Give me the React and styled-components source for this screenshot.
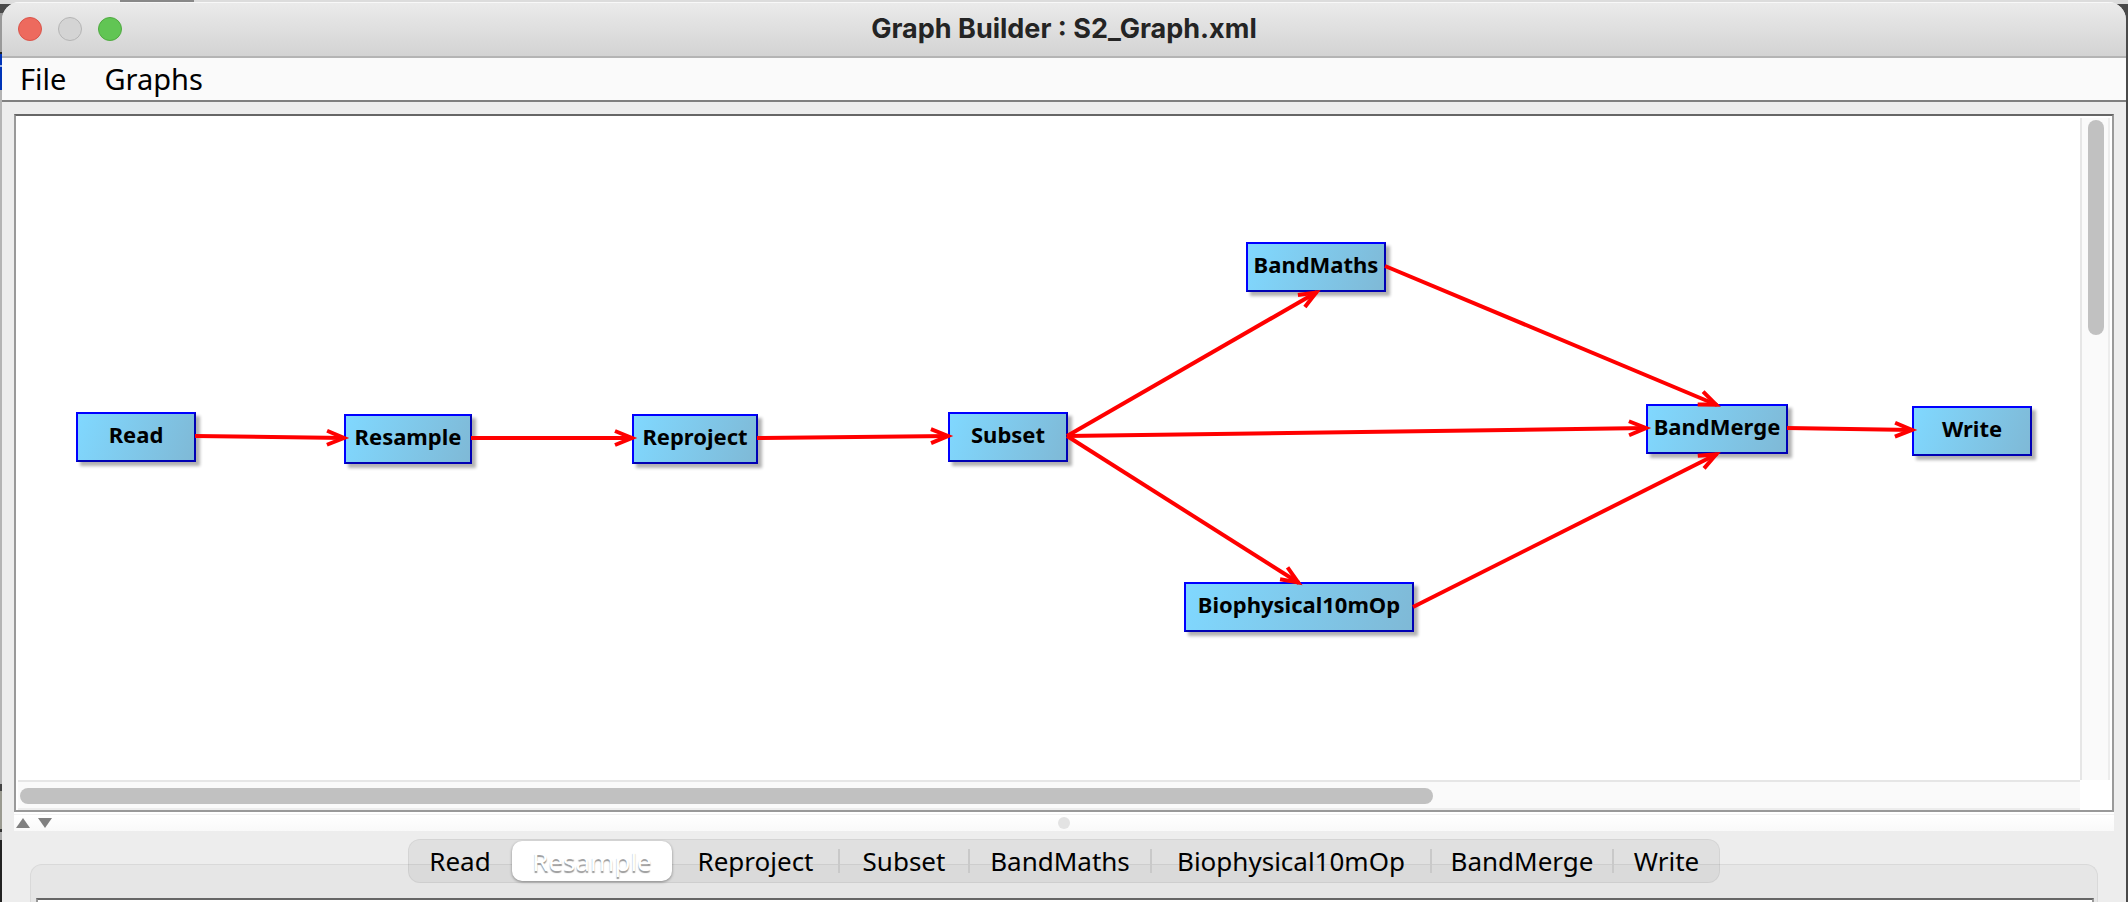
import React, { useState } from "react";
import styled, { createGlobalStyle, css } from "styled-components";

const GlobalStyle = createGlobalStyle`
  *, *::before, *::after { box-sizing: border-box; }
  body { margin: 0; }
  button { margin: 0; padding: 0; border: 0; background: none; font: inherit; color: inherit; }
`;

const Desktop = styled.div`
  height: 100vh;
  min-height: 600px;
  padding: 2px 2px 0;
  overflow: hidden;
  font-family: "Noto Sans", "Liberation Sans", sans-serif;
  color: #000;
  background:
    linear-gradient(#888, #888) 120px 0 / 74px 2px no-repeat,
    linear-gradient(#dcdcdc 0 4px, transparent 4px) 0 0 / 100% 4px no-repeat,
    linear-gradient(#4a4a4a 0 13px, #999 13px 52px, #222 52px 54px, #0034b8 54px 65px,
      #9db4e8 65px 67px, #0034b8 67px 90px, #b4b4b4 90px 784px, #444 784px 791px,
      #9a9a90 791px 829px, #333 829px 832px, #aaa 832px 840px, #222 840px) 0 0 / 20px 100% no-repeat,
    #4a4a4a;
`;

const Window = styled.main`
  display: flex;
  flex-direction: column;
  height: 100%;
  overflow: hidden;
  border-radius: 18px 18px 0 0;
  background: #ededed;
`;

const TitleBar = styled.header`
  display: grid;
  grid-template-columns: 1fr auto 1fr;
  align-items: center;
  flex: none;
  height: 56px;
  padding: 0 16px;
  border-bottom: 2px solid #b4b4b4;
  background: linear-gradient(#ebebeb, #d3d3d3);
  box-shadow: inset 0 1px 0 #f8f8f8;
`;

const Lights = styled.div`
  display: flex;
  gap: 16px;
`;

const Light = styled.button`
  width: 24px;
  height: 24px;
  border: 1px solid ${(p) => p.$edge};
  border-radius: 50%;
  background: ${(p) => p.$fill};
`;

const Title = styled.h1`
  margin: 0;
  font: 700 27px/32px Inter, "Liberation Sans", sans-serif;
  color: #242424;
`;

const MenuBar = styled.nav`
  display: flex;
  align-items: center;
  gap: 38px;
  flex: none;
  height: 44px;
  padding: 0 18px;
  border-bottom: 2px solid #808080;
  background: #fafafa;
  font-size: 29px;
  line-height: 40px;
`;

const Content = styled.div`
  display: flex;
  flex-direction: column;
  flex: 1;
  min-height: 0;
  padding: 12px 12px 0;
`;

const ScrollPane = styled.section`
  display: grid;
  grid-template: minmax(0, 1fr) 30px / minmax(0, 1fr) 32px;
  flex: 1;
  min-height: 0;
  border: 2px solid #999;
  border-top-color: #666;
  background: #fff;
`;

const Canvas = styled.div`
  position: relative;
  overflow: hidden;
`;

const Edges = styled.svg`
  position: absolute;
  inset: 0;
  width: 100%;
  height: 100%;
  fill: none;
  stroke: #f00;
  stroke-width: 4;
  pointer-events: none;
`;

const Node = styled.button`
  position: absolute;
  left: ${(p) => p.$x}px;
  top: ${(p) => p.$y}px;
  width: ${(p) => p.$w}px;
  height: 50px;
  padding-bottom: 6px;
  border: 2px solid;
  border-color: #00f #0000b4 #0000b4 #00f;
  background: linear-gradient(110deg, #80d8ff, #7fb9d6);
  box-shadow: 4px 4px 3px rgba(0, 0, 0, 0.3);
  font-size: 22px;
  font-weight: 700;
  line-height: 28px;
  white-space: nowrap;
`;

const Track = styled.div`
  background: #fafafa;
  ${(p) =>
    p.$vertical
      ? css`
          margin: 2px 2px 0 0;
          padding: 2px 4px 2px 6px;
          border-left: 2px solid #e6e6e6;
          border-right: 2px solid #ededed;
        `
      : css`
          margin-left: 2px;
          padding: 6px 2px 4px;
          border-top: 2px solid #e6e6e6;
          border-bottom: 2px solid #ededed;
        `}
`;

const Thumb = styled.div`
  width: ${(p) => (p.$vertical ? "16px" : p.$size)};
  height: ${(p) => (p.$vertical ? p.$size : "16px")};
  border-radius: 8px;
  background: #c1c1c1;
`;

const Divider = styled.div`
  display: grid;
  grid-template-columns: 1fr auto 1fr;
  align-items: center;
  flex: none;
  height: 19px;
  padding: 3px 2px 0;
  background: linear-gradient(#fff 0 2px, #f2f2f2 2px 3px, #fff 3px, #f9f9f9);
`;

const Arrows = styled.div`
  display: flex;
  gap: 8px;
`;

const ArrowButton = styled.button`
  display: flex;
  svg { width: 14px; height: 10px; fill: #808080; }
`;

const Grip = styled.span`
  width: 12px;
  height: 12px;
  border-radius: 50%;
  background: #e3e3e3;
`;

const TabArea = styled.section`
  display: flex;
  flex-direction: column;
  flex: none;
  padding: 8px 16px 0;
`;

const TabStrip = styled.div`
  display: flex;
  align-self: center;
  z-index: 1;
  height: 44px;
  margin-bottom: -19px;
  padding: 2px 0;
  border-radius: 12px;
  background: rgba(0, 0, 0, 0.05);
  box-shadow: inset 0 0 0 1px rgba(0, 0, 0, 0.05);
`;

const Tab = styled.button`
  display: flex;
  align-items: center;
  justify-content: center;
  width: ${(p) => p.$w}px;
  border-radius: 10px;
  font-size: 26px;
  line-height: 36px;
  white-space: nowrap;
  ${(p) =>
    p.$selected &&
    css`
      background: #fff;
      color: #fff;
      box-shadow: 0 1px 3px rgba(0, 0, 0, 0.4);
      text-shadow: 0 2px 1px #999;
    `}
`;

const Separator = styled.span`
  align-self: center;
  width: 2px;
  height: 24px;
  margin: 0 -1px;
  background: #c9c9c9;
`;

const TabPanel = styled.div`
  flex: none;
  height: 38px;
  padding: 33px 3px 0 5px;
  border: 1px solid #d9d9d9;
  border-bottom: 0;
  border-radius: 12px 12px 0 0;
  background: #e6e6e6;
`;

const PanelBody = styled.div`
  height: 4px;
  border: 2px solid #999;
  border-top-color: #666;
  border-bottom: 0;
  background: #fff;
`;

const nodes = [
  { name: "Read", x: 60, y: 296, w: 120 },
  { name: "Resample", x: 328, y: 298, w: 128 },
  { name: "Reproject", x: 616, y: 298, w: 126 },
  { name: "Subset", x: 932, y: 296, w: 120 },
  { name: "BandMaths", x: 1230, y: 126, w: 140 },
  { name: "Biophysical10mOp", x: 1168, y: 466, w: 230 },
  { name: "BandMerge", x: 1630, y: 288, w: 142 },
  { name: "Write", x: 1896, y: 290, w: 120 },
];

const edges = [
  [179, 320, 329, 322],
  [455, 322, 617, 322],
  [741, 322, 933, 320],
  [1051, 320, 1301, 176],
  [1051, 320, 1283, 467],
  [1051, 320, 1631, 312],
  [1369, 150, 1701, 289],
  [1397, 491, 1701, 338],
  [1771, 312, 1897, 314],
];

const tabs = [
  { name: "Read", w: 104 },
  { name: "Resample", w: 160 },
  { name: "Reproject", w: 167, sep: true },
  { name: "Subset", w: 130, sep: true },
  { name: "BandMaths", w: 182, sep: true },
  { name: "Biophysical10mOp", w: 280, sep: true },
  { name: "BandMerge", w: 182, sep: true },
  { name: "Write", w: 107 },
];

export default function App() {
  const [selected, setSelected] = useState("Resample");
  return (
    <>
      <GlobalStyle />
      <Desktop>
        <Window>
          <TitleBar>
            <Lights>
              <Light aria-label="Close" $fill="#ed6a5e" $edge="#d9544a" />
              <Light aria-label="Minimize" $fill="#d4d4d4" $edge="#b4b4b4" />
              <Light aria-label="Zoom" $fill="#61c554" $edge="#4fa940" />
            </Lights>
            <Title>Graph Builder : S2_Graph.xml</Title>
          </TitleBar>
          <MenuBar>
            <button>File</button>
            <button>Graphs</button>
          </MenuBar>
          <Content>
            <ScrollPane>
              <Canvas>
                {nodes.map((n) => (
                  <Node key={n.name} $x={n.x} $y={n.y} $w={n.w} onClick={() => setSelected(n.name)}>
                    {n.name}
                  </Node>
                ))}
                <Edges aria-hidden="true">
                  <defs>
                    <marker id="head" markerUnits="userSpaceOnUse" markerWidth="24" markerHeight="24"
                      refX="20" refY="12" orient="auto" overflow="visible">
                      <path d="M2 5 L19 12 L2 19" strokeWidth="4" />
                    </marker>
                  </defs>
                  {edges.map(([x1, y1, x2, y2]) => (
                    <line key={`${x1}-${x2}-${y2}`} x1={x1} y1={y1} x2={x2} y2={y2} markerEnd="url(#head)" />
                  ))}
                </Edges>
              </Canvas>
              <Track $vertical>
                <Thumb $vertical $size="calc(33% - 2px)" />
              </Track>
              <Track>
                <Thumb $size="calc(69% - 7px)" />
              </Track>
            </ScrollPane>
            <Divider>
              <Arrows>
                <ArrowButton aria-label="Collapse up">
                  <svg viewBox="0 0 14 10"><path d="M7 0 14 10H0z" /></svg>
                </ArrowButton>
                <ArrowButton aria-label="Collapse down">
                  <svg viewBox="0 0 14 10"><path d="M0 0H14L7 10z" /></svg>
                </ArrowButton>
              </Arrows>
              <Grip />
            </Divider>
            <TabArea>
              <TabStrip role="tablist">
                {tabs.map((t) => (
                  <React.Fragment key={t.name}>
                    <Tab role="tab" aria-selected={t.name === selected} $selected={t.name === selected}
                      $w={t.w} onClick={() => setSelected(t.name)}>
                      {t.name}
                    </Tab>
                    {t.sep && <Separator />}
                  </React.Fragment>
                ))}
              </TabStrip>
              <TabPanel role="tabpanel" aria-label={selected}>
                <PanelBody />
              </TabPanel>
            </TabArea>
          </Content>
        </Window>
      </Desktop>
    </>
  );
}
